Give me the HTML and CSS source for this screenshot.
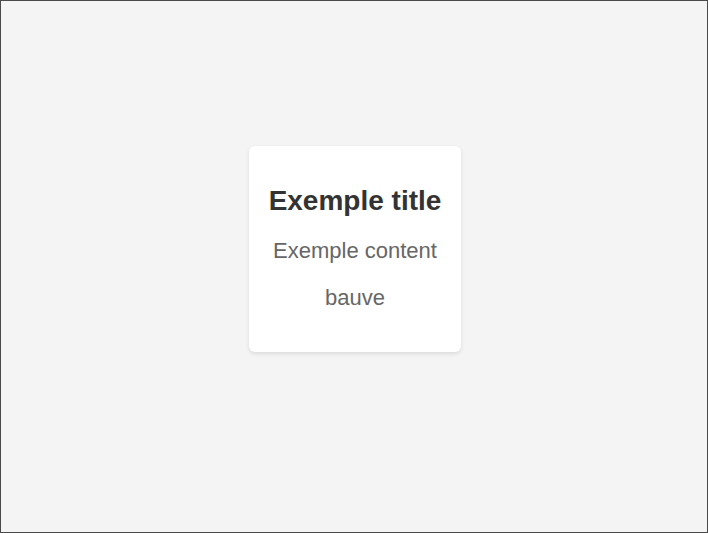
FILE: index.html
```html
<!DOCTYPE html>
<html lang="fr">
<head>
<meta charset="utf-8">
<title>Exemple</title>
<link rel="stylesheet" href="styles.css">
</head>
<body>
<main class="frame">
  <div class="card">
    <h2 class="card-title">Exemple title</h2>
    <p class="card-text">Exemple content</p>
    <p class="card-text">bauve</p>
  </div>
</main>
</body>
</html>
```

FILE: styles.css
```css
html, body {
  margin: 0;
  padding: 0;
}
body {
  font-family: "Liberation Sans", Arial, sans-serif;
  background: #f4f4f4;
}
.frame {
  box-sizing: border-box;
  width: 708px;
  height: 533px;
  border: 1px solid #4a4a4a;
  background: #f4f4f4;
  display: flex;
  justify-content: center;
  align-items: flex-start;
  padding: 145px 0 0 2px;
}
.card {
  box-sizing: border-box;
  width: 212px;
  height: 206px;
  background: #ffffff;
  border-radius: 6px;
  box-shadow: 0 2px 4px rgba(0, 0, 0, 0.1);
  padding: 39px 10px 40px;
  display: flex;
  flex-direction: column;
  align-items: center;
  gap: 22px;
  text-align: center;
}
.card-title {
  margin: 0;
  font-size: 28px;
  line-height: 31px;
  font-weight: bold;
  color: #333333;
  white-space: nowrap;
}
.card-text {
  margin: 0;
  font-size: 22px;
  line-height: 25px;
  color: #666666;
  white-space: nowrap;
}
```
